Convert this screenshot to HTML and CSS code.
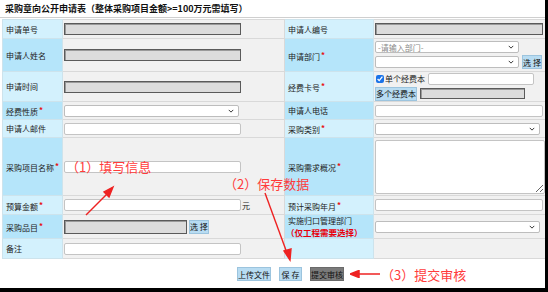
FILE: index.html
```html
<!DOCTYPE html>
<html lang="zh">
  <head>
    <meta charset="UTF-8" />
    <title>采购意向公开申请表</title>
    <link rel="stylesheet" href="styles.css">
  </head>
  <body>
    <div class="page">
      <div class="title">采购章向公开申请表（整体采购项目金额&gt;=100万元需填写）</div>
      <table class="form">
        <colgroup>
          <col class="c-lab1" />
          <col class="c-val1" />
          <col class="c-lab2" />
          <col class="c-val2" />
        </colgroup>
        <tr class="r-no">
          <th>申请单号</th>
          <td><input class="inp ro wl" type="text" readonly /></td>
          <th>申请人编号</th>
          <td><input class="inp ro wr" type="text" readonly /></td>
        </tr>
        <tr class="dk r-dept">
          <th>申请人姓名</th>
          <td><input class="inp ro wl" type="text" readonly /></td>
          <th>申请部门<span class="req">*</span></th>
          <td>
            <div class="stack">
              <span class="sel w-dept">
                <select class="muted"><option>-请输入部门-</option></select>
                <svg class="chev" viewBox="0 0 8 5"><path d="M1 1l3 3 3-3" /></svg>
              </span>
              <div class="line">
                <span class="sel w-dept">
                  <select><option></option></select>
                  <svg class="chev" viewBox="0 0 8 5"><path d="M1 1l3 3 3-3" /></svg>
                </span>
                <button class="btn pick" type="button">选 择</button>
              </div>
            </div>
          </td>
        </tr>
        <tr class="r-card">
          <th>申请时间</th>
          <td><input class="inp ro wl" type="text" readonly /></td>
          <th>经费卡号<span class="req">*</span></th>
          <td>
            <div class="stack">
              <div class="line">
                <label class="chk"><input type="checkbox" checked />单个经费本</label>
                <input class="inp w-card" type="text" />
              </div>
              <div class="line">
                <button class="btn multi" type="button">多个经费本</button>
                <input class="inp ro w-card2" type="text" readonly />
              </div>
            </div>
          </td>
        </tr>
        <tr class="dk r-sm">
          <th>经费性质<span class="req">*</span></th>
          <td>
            <span class="sel w-nature">
              <select><option></option></select>
              <svg class="chev" viewBox="0 0 8 5"><path d="M1 1l3 3 3-3" /></svg>
            </span>
          </td>
          <th>申请人电话</th>
          <td><input class="inp wr" type="text" /></td>
        </tr>
        <tr class="r-sm">
          <th>申请人邮件</th>
          <td><input class="inp wl" type="text" /></td>
          <th>采购类别<span class="req">*</span></th>
          <td>
            <span class="sel w-type">
              <select><option></option></select>
              <svg class="chev" viewBox="0 0 8 5"><path d="M1 1l3 3 3-3" /></svg>
            </span>
          </td>
        </tr>
        <tr class="dk r-big">
          <th>采购项目名称<span class="req">*</span></th>
          <td><input class="inp wl" type="text" /></td>
          <th>采购需求概况<span class="req">*</span></th>
          <td><textarea class="area"></textarea></td>
        </tr>
        <tr class="r-mid">
          <th>预算金额<span class="req">*</span></th>
          <td><input class="inp wl" type="text" /><span class="unit">元</span></td>
          <th>预计采购年月<span class="req">*</span></th>
          <td><input class="inp wr" type="text" /></td>
        </tr>
        <tr class="dk r-item">
          <th>采购品目<span class="req">*</span></th>
          <td>
            <input class="inp ro w-item" type="text" readonly />
            <button class="btn pick" type="button">选 择</button>
          </td>
          <th class="two">
            <div>实施归口管理部门</div>
            <div class="warn">（仅工程需要选择）</div>
          </th>
          <td>
            <span class="sel w-type">
              <select><option></option></select>
              <svg class="chev" viewBox="0 0 8 5"><path d="M1 1l3 3 3-3" /></svg>
            </span>
          </td>
        </tr>
        <tr class="r-last">
          <th>备注</th>
          <td><input class="inp wl" type="text" /></td>
          <th></th>
          <td></td>
        </tr>
      </table>

      <div class="actions">
        <button class="btn upload" type="button">上传文件</button>
        <button class="btn save" type="button">保 存</button>
        <button class="btn dark submit" type="button">提交审核</button>
        <svg class="arrow-left" viewBox="0 0 30 8">
          <path d="M30 4H7" />
          <polygon points="0,4 9,0.5 9,7.5" />
        </svg>
        <span class="note-inline">（3）提交审核</span>
      </div>

      <!-- hand-drawn annotations laid over the form -->
      <span class="note n1">（1）填写信息</span>
      <span class="note n2">（2）保存数据</span>
      <svg class="marks" viewBox="0 0 545 288">
        <path d="M86 215L110 191" />
        <polygon points="113,187 104,192 109,197" />
        <path d="M265 193L287 253" />
        <polygon points="290,260 284,251 291,249" />
      </svg>
    </div>
  </body>
</html>
```

FILE: styles.css
```css
body {
  margin: 0;
  font-family: "Noto Sans CJK SC", "Noto Sans", sans-serif;
  font-size: 8px;
  color: #222;
  background-color: #fff;
}

.page {
  position: relative;
  width: 545px;
  height: 288px;
  border-right: 3px solid #000;
  border-bottom: 4px solid #000;
  overflow: hidden;
}

.title {
  height: 17px;
  line-height: 17px;
  padding-left: 5px;
  font-size: 9px;
  font-weight: bold;
  color: #111;
  border-bottom: 1px solid #cfcfcf;
  margin-bottom: 1px;
}

.form {
  margin-left: 2px;
  width: 543px;
  border-collapse: collapse;
  table-layout: fixed;
}

.c-lab1 { width: 60px; }
.c-val1 { width: 222px; }
.c-lab2 { width: 89px; }
.c-val2 { width: 172px; }

.form th,
.form td {
  border: 1px solid #d9d9d9;
  padding: 0 1px;
  vertical-align: middle;
}

.form th {
  font-weight: normal;
  text-align: left;
  padding-left: 3px;
  background-color: #d3f1fd;
  border-color: #cde3ec;
  white-space: nowrap;
}

.form td {
  background-color: #f1f1f1;
}

.form tr.dk th {
  background-color: #b5e5fa;
}

.r-no { height: 19px; }
.r-dept { height: 33px; }
.r-card { height: 30px; }
.r-sm { height: 18px; }
.r-big { height: 58px; }
.r-mid { height: 19px; }
.r-item { height: 24px; }
.r-last { height: 20px; }

.req {
  color: #e81010;
  font-weight: bold;
  vertical-align: 2px;
  margin-left: 1px;
}

.two div {
  height: 11px;
  line-height: 11px;
}

.two .warn {
  height: 12px;
  line-height: 12px;
  color: #e8000b;
  font-size: 8.5px;
  font-weight: bold;
  margin-left: -2px;
}

.inp {
  box-sizing: border-box;
  height: 12px;
  margin: 0;
  padding: 0 2px;
  font: inherit;
  border: 1px solid #c4c4c4;
  border-radius: 2px;
  background-color: #fff;
  vertical-align: middle;
}

.inp.ro {
  background-color: #dcdcdc;
  border: 1px solid #5a5a5a;
  box-shadow: inset 1px 1px 0 #9a9a9a;
  border-radius: 0;
}

.wl { width: 177px; }
.wr { width: 168px; }
.w-card { width: 106px; }
.w-card2 { width: 105px; height: 11px; }
.w-item { width: 123px; height: 14px; }

.unit {
  margin-left: 1px;
  vertical-align: middle;
}

.stack {
  display: flex;
  flex-direction: column;
  gap: 2px;
}

.line {
  display: flex;
  align-items: center;
  gap: 3px;
}

.sel {
  position: relative;
  display: inline-block;
  vertical-align: middle;
}

.sel select {
  box-sizing: border-box;
  width: 100%;
  height: 12px;
  margin: 0;
  padding: 0 2px;
  font: inherit;
  color: #222;
  border: 1px solid #bdbdbd;
  border-radius: 2px;
  background-color: #fff;
  appearance: none;
  -webkit-appearance: none;
}

.sel select.muted {
  color: #8a8a8a;
}

.chev {
  position: absolute;
  right: 5px;
  top: 4px;
  width: 6px;
  height: 4px;
  fill: none;
  stroke: #333;
  stroke-width: 1.3;
}

.w-dept { width: 144px; }
.w-nature { width: 175px; }
.w-type { width: 165px; }

.chk {
  display: flex;
  align-items: center;
  gap: 1px;
}

.chk input {
  width: 8px;
  height: 8px;
  margin: 0 0 0 1px;
  accent-color: #1a73e8;
}

.area {
  display: block;
  box-sizing: border-box;
  width: 170px;
  height: 54px;
  margin: 0;
  border: 1px solid #c4c4c4;
  border-radius: 2px;
  background-color: #fff;
}

.btn {
  box-sizing: border-box;
  height: 14px;
  margin: 0;
  padding: 0 2px;
  font: inherit;
  color: #111;
  background-color: #b8dcf2;
  border: 1px solid #9cc4de;
  border-radius: 0;
  vertical-align: middle;
  white-space: nowrap;
  cursor: pointer;
}

.btn.dark {
  background-color: #7a7a7a;
  border-color: #6a6a6a;
}

.pick { width: 20px; padding: 0; }
.multi { width: 42px; padding: 0; }

.actions {
  display: flex;
  align-items: center;
  height: 30px;
  padding-left: 237px;
}

.upload { width: 34px; padding: 0; }
.save { width: 23px; padding: 0; margin-left: 8px; }
.submit { width: 34px; padding: 0; margin-left: 8px; }

.arrow-left {
  width: 30px;
  height: 8px;
  margin-left: 6px;
  stroke: #ee2222;
  stroke-width: 1.5;
  fill: #ee2222;
}

.note-inline,
.note {
  font-size: 13px;
  color: #ff3b3b;
  white-space: nowrap;
}

.note-inline {
  margin-left: 1px;
}

.note {
  position: absolute;
  line-height: 14px;
}

.n1 { left: 66px; top: 160px; }
.n2 { left: 224px; top: 177px; }

.marks {
  position: absolute;
  left: 0;
  top: 0;
  width: 545px;
  height: 288px;
  pointer-events: none;
  stroke: #ee2222;
  stroke-width: 1.4;
  fill: #ee2222;
}
```
